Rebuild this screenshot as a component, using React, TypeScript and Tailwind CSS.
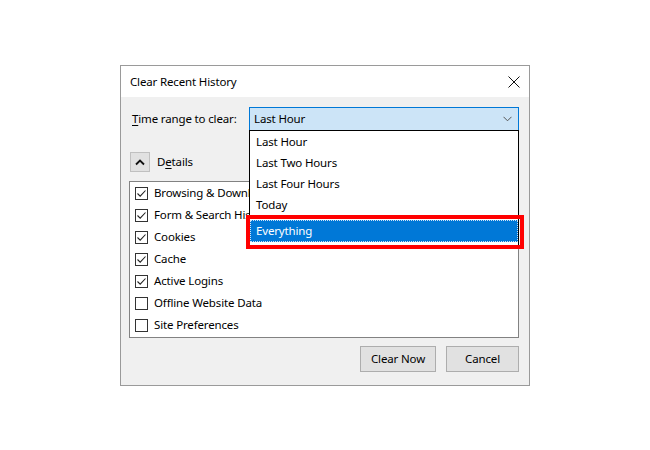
import React from "react";

const Check = ({ checked }: { checked: boolean }) => (
  <div className="w-[13px] h-[13px] border border-[#333333] bg-white flex items-center justify-center shrink-0">
    {checked && (
      <svg width="11" height="11" viewBox="0 0 11 11">
        <path d="M1.5 5.5 L4.2 8.2 L9.5 2.5" fill="none" stroke="#222" strokeWidth="1.1" />
      </svg>
    )}
  </div>
);

const items: [string, boolean][] = [
  ["Browsing & Download History", true],
  ["Form & Search History", true],
  ["Cookies", true],
  ["Cache", true],
  ["Active Logins", true],
  ["Offline Website Data", false],
  ["Site Preferences", false],
];

export default function App() {
  return (
    <div
      className="w-[650px] h-[450px] bg-white relative overflow-hidden text-[11.5px] tracking-[-0.15px] text-black"
      style={{ fontFamily: '"Noto Sans", "Open Sans", sans-serif' }}
    >
      <div className="absolute left-[120px] top-[65px] w-[410px] h-[321px] border border-[#9a9a9a] bg-[#f0f0f0] flex flex-col">
        <div className="h-[31px] bg-white flex items-center justify-between pl-[9px] pr-[9px] shrink-0">
          <span>Clear Recent History</span>
          <svg width="12" height="12" viewBox="0 0 12 12">
            <path d="M0.5 0.5 L11.5 11.5 M11.5 0.5 L0.5 11.5" stroke="#111" strokeWidth="1" />
          </svg>
        </div>
        <div className="flex flex-col pl-[7px] pr-[10px] pt-[10px]">
          <div className="flex items-center">
            <span className="pl-[4px] w-[121px]">
              <span className="underline underline-offset-2">T</span>ime range to clear:
            </span>
            <div className="relative w-[270px] h-[24px] border border-[#0078d7] bg-[#cce4f7] flex items-center justify-between pl-[4px] pr-[6px]">
              <span>Last Hour</span>
              <svg width="9" height="6" viewBox="0 0 9 6">
                <path d="M0.5 0.8 L4.5 4.8 L8.5 0.8" fill="none" stroke="#555" strokeWidth="1" />
              </svg>
              <div className="absolute left-[-1px] top-[22px] w-[270px] h-[118px] border border-black bg-white flex flex-col z-10">
                <div className="h-[21px] flex items-center pl-[6px]">Last Hour</div>
                <div className="h-[21px] flex items-center pl-[6px]">Last Two Hours</div>
                <div className="h-[21px] flex items-center pl-[6px]">Last Four Hours</div>
                <div className="h-[21px] flex items-center pl-[6px]">Today</div>
                <div className="mt-[5px] h-[22px] bg-[#0078d7] text-white flex items-center pl-[5px] border border-dotted border-[#cfe3f7]">
                  Everything
                </div>
              </div>
            </div>
          </div>
          <div className="flex items-center mt-[21px]">
            <div className="ml-[2px] w-[20px] h-[20px] bg-[#e1e1e1] border border-[#c0c0c0] flex items-center justify-center">
              <svg width="10" height="7" viewBox="0 0 10 7">
                <path d="M1 5.5 L5 1.5 L9 5.5" fill="none" stroke="#111" strokeWidth="1.8" />
              </svg>
            </div>
            <span className="ml-[7px]">
              D<span className="underline underline-offset-2">e</span>tails
            </span>
          </div>
          <div className="mt-[9px] ml-[1px] w-[390px] h-[157px] border border-[#828282] bg-white flex flex-col overflow-hidden">
            {items.map(([label, c]) => (
              <div key={label} className="h-[22px] flex items-center pl-[5px] gap-[6px] whitespace-nowrap">
                <Check checked={c} />
                <span>{label}</span>
              </div>
            ))}
          </div>
          <div className="flex justify-end gap-[10px] mt-[8px]">
            <button className="w-[76px] h-[26px] bg-[#e1e1e1] border border-[#adadad]">Clear Now</button>
            <button className="w-[73px] h-[26px] bg-[#e1e1e1] border border-[#adadad]">Cancel</button>
          </div>
        </div>
      </div>
      <div className="absolute left-[246px] top-[215px] w-[278px] h-[34px] border-[4px] border-[#ff0000] z-20" />
    </div>
  );
}
